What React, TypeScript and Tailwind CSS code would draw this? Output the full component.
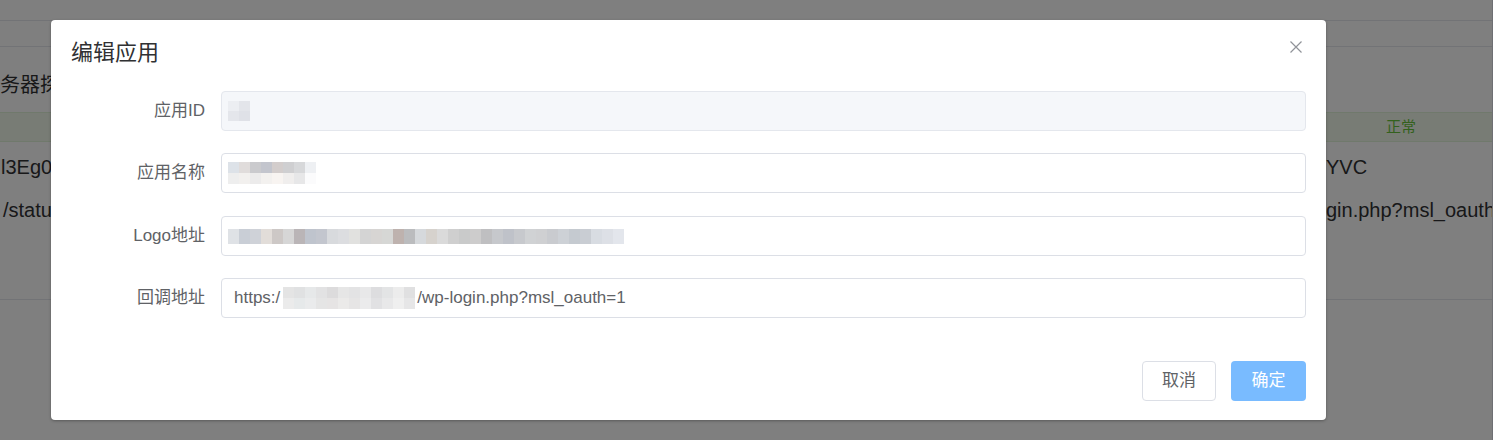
import React from "react";

const FONT = "font-['Liberation_Sans','Noto_Sans_CJK_SC',sans-serif]";

function Mosaic({ rows, cell = 11, h = 11 }: { rows: string[][]; cell?: number; h?: number }) {
  return (
    <div className="flex flex-col blur-[0.6px]">
      {rows.map((r, i) => (
        <div key={i} className="flex">
          {r.map((c, j) => (
            <div key={j} style={{ background: c, width: cell, height: h }} />
          ))}
        </div>
      ))}
    </div>
  );
}

const logoTop = [
  "#dfe2e6", "#c9ced6", "#cfd2d8", "#e2ddd9", "#cdc8c6", "#d6d6d6", "#bab5b7", "#bfc4cd", "#c3c6ce",
  "#d8dadd", "#dcdde0", "#e1e1df", "#d4d4d4", "#d7d5d3", "#d6d7d5", "#beb2ae", "#bbbcbe", "#d6d9dc",
  "#d6d2cd", "#dadada", "#cfcfcf", "#c9caca", "#cdcccc", "#bfbfc1", "#c6c8cc", "#bfc2c9", "#c7c9cd",
  "#d0d2d4", "#cfd0d2", "#c9cbcf", "#cdd1d6", "#c5cad0", "#c9cdd3", "#d8dce2", "#dde0e6", "#e3e6ec",
];

function Row({ label, children, disabled, className = "" }: { label: string; children: React.ReactNode; disabled?: boolean; className?: string }) {
  return (
    <div className={`flex items-center ${className}`}>
      <div className="w-[150px] pr-[16px] text-right text-[17px] text-[#606266] leading-[40px]">{label}</div>
      <div
        className={`flex h-[40px] flex-1 items-center overflow-hidden rounded-[4px] border ${
          disabled ? "border-[#e4e7ed] bg-[#f5f7fa]" : "border-[#dcdfe6] bg-white"
        }`}
      >
        {children}
      </div>
    </div>
  );
}

export default function App() {
  return (
    <div className={`relative h-[440px] w-[1493px] overflow-hidden bg-white ${FONT}`}>
      {/* background page */}
      <div className="flex h-full w-[1493px] flex-col border-r border-[#dcdfe6]">
        <div className="h-[21px] shrink-0 border-b border-[#e4e7ed]" />
        <div className="h-[26px] shrink-0 border-b border-[#e4e7ed]" />
        <div className="h-[65px] shrink-0 overflow-hidden pt-[28px] text-[20px] leading-[20px] text-[#303133] whitespace-nowrap">
          <span className="ml-[-20px]">服务器探针</span>
        </div>
        <div className="flex h-[30px] shrink-0 border-y border-[#e1f3d8] bg-[#f0f9eb]">
          <div className="flex-1" />
          <div className="flex w-[182px] items-center justify-center text-[15px] text-[#67c23a]">正常</div>
        </div>
        <div className="flex h-[50px] shrink-0 items-center text-[20px] text-[#303133] whitespace-nowrap">
          <div className="flex-1 pl-[1px]">l3Eg0</div>
          <div className="w-[182px] overflow-hidden pl-[16px]">YVC</div>
        </div>
        <div className="flex h-[36px] shrink-0 items-center text-[20px] text-[#303133] whitespace-nowrap">
          <div className="flex-1 pl-[3px]">/status</div>
          <div className="w-[182px] overflow-hidden pl-[16px]">gin.php?msl_oauth=1</div>
        </div>
        <div className="h-[72px] shrink-0 border-b border-[#e4e7ed]" />
      </div>

      {/* overlay */}
      <div className="absolute inset-0 bg-black/50" />

      {/* dialog */}
      <div className="absolute left-[51px] top-[20px] w-[1275px] rounded-[4px] bg-white shadow-[0_1px_3px_rgba(0,0,0,0.3)]">
        <div className="px-[20px] pt-[20px] text-[22px] leading-[26px] text-[#303133]">编辑应用</div>
        <button className="absolute right-[24px] top-[21px] h-[12px] w-[12px]">
          <svg width="12" height="12" viewBox="0 0 12 12" className="block">
            <path d="M0.5 0.5L11.5 11.5M11.5 0.5L0.5 11.5" stroke="#909399" strokeWidth="1.2" fill="none" />
          </svg>
        </button>

        <div className="pl-[20px] pr-[20px] pt-[25px]">
          <Row label="应用ID" disabled>
            <div className="ml-[6px]">
              <Mosaic rows={[["#eceef2", "#e3e5ea"], ["#e4e6eb", "#dfe1e7"]]} cell={11} h={10} />
            </div>
          </Row>
          <Row label="应用名称" className="mt-[22px]">
            <div className="ml-[6px]">
              <Mosaic
                rows={[
                  ["#dde2e8", "#e0dcdb", "#cacacd", "#c3c5cd", "#d3cdcc", "#cfcfd1", "#d7d8da", "#eef0f3"],
                  ["#eeeeee", "#f2f0ee", "#ecebeb", "#f3f1ef", "#f8f4f1", "#f0eeed", "#e7e7e8", "#fbfbfc"],
                ]}
              />
            </div>
          </Row>
          <Row label="Logo地址" className="mt-[23px]">
            <div className="ml-[6px]">
              <Mosaic rows={[logoTop]} h={15} />
            </div>
          </Row>
          <Row label="回调地址" className="mt-[22px]">
            <div className="flex items-center whitespace-nowrap pl-[12px] text-[17px] text-[#606266]">
              <span>https:/</span>
              <div className="ml-[3px] mr-[2px]">
                <Mosaic
                  rows={[
                    ["#e4e4e4", "#e0e1e2", "#e6e8e9", "#e2e2e3", "#dcdbdc", "#e6e6e6", "#e3e3e4", "#e8e8e9", "#dddddf", "#e3e4e5", "#ececec", "#e0e0e1"],
                    ["#ebebeb", "#e6e9ea", "#eaebec", "#e5e5e5", "#e6e4e4", "#ebeae9", "#e6e5e5", "#ebebec", "#e1e1e3", "#e8e8e9", "#efefef", "#e6e6e7"],
                  ]}
                />
              </div>
              <span>/wp-login.php?msl_oauth=1</span>
            </div>
          </Row>

          <div className="flex justify-end gap-[15px] pb-[19px] pt-[43px]">
            <button className="h-[40px] w-[74px] rounded-[4px] border border-[#dcdfe6] bg-white text-[17px] text-[#606266]">
              取消
            </button>
            <button className="h-[40px] w-[75px] rounded-[4px] bg-[#79bbff] text-[17px] text-white">确定</button>
          </div>
        </div>
      </div>
    </div>
  );
}
